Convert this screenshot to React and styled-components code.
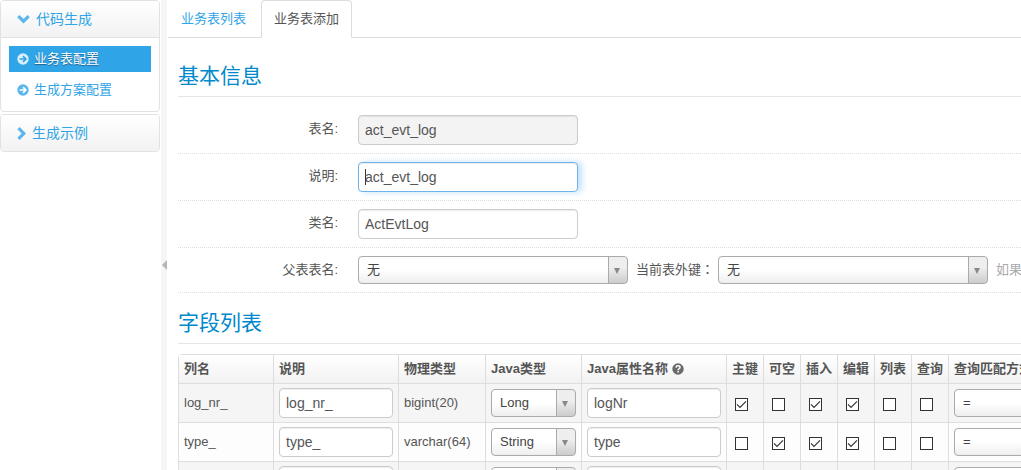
import React, { useState } from 'react';
import styled, { createGlobalStyle } from 'styled-components';

const GlobalStyle = createGlobalStyle`
  * {
    box-sizing: border-box;
  }

  body {
    margin: 0;
    background: #fff;
    color: #555;
    font-family: "Liberation Sans", "Noto Sans CJK SC", sans-serif;
    font-size: 13px;
    line-height: 20px;
  }
`;

const menuItems = [
  { name: '业务表配置', active: true },
  { name: '生成方案配置', active: false },
];

// Checkbox columns of the field table
const flags = ['主键', '可空', '插入', '编辑', '列表', '查询'];

const columns = [
  { column: 'log_nr_', comment: 'log_nr_', jdbcType: 'bigint(20)', javaType: 'Long', javaField: 'logNr', checked: ['主键', '插入', '编辑'] },
  { column: 'type_', comment: 'type_', jdbcType: 'varchar(64)', javaType: 'String', javaField: 'type', checked: ['可空', '插入', '编辑'] },
  { column: '', comment: '', jdbcType: '', javaType: 'String', javaField: '', checked: [] },
];

const Page = styled.div`
  display: flex;
  height: 100vh;
  overflow: hidden;
`;

const Sidebar = styled.aside`
  flex: 0 0 160px;
  display: flex;
  flex-direction: column;
  gap: 2px;
`;

const MenuGroup = styled.section`
  border: 1px solid #e2e2e2;
  border-radius: 4px;
  overflow: hidden;
`;

const MenuHeading = styled.button`
  display: flex;
  align-items: center;
  gap: 6px;
  width: 100%;
  height: 36px;
  padding: 0 16px;
  border: 0;
  background: linear-gradient(#fff, #f2f2f2);
  color: #2fa4e7;
  font: inherit;
  font-size: 14px;
  cursor: pointer;

  svg {
    fill: #5ab6ec;
  }
`;

const MenuList = styled.nav`
  display: flex;
  flex-direction: column;
  gap: 5px;
  padding: 8px;
  border-top: 1px solid #e2e2e2;
`;

const MenuLink = styled.a`
  display: flex;
  align-items: center;
  gap: 5px;
  height: 26px;
  padding: 0 8px;
  background: ${(props) => (props.$active ? '#2fa4e7' : 'transparent')};
  color: ${(props) => (props.$active ? '#fff' : '#2fa4e7')};
  text-shadow: ${(props) => (props.$active ? '0 1px 1px rgba(0, 0, 0, 0.4)' : 'none')};
  text-decoration: none;
`;

const Splitter = styled.button`
  flex: 0 0 6px;
  display: flex;
  align-items: flex-start;
  justify-content: flex-end;
  margin: 0 1px;
  padding: 260px 0 0;
  border: 0;
  background: #f5f5f5;
  cursor: pointer;
`;

const Content = styled.main`
  flex: 1;
  min-width: 0;
  overflow: hidden;
`;

const Tabs = styled.nav`
  display: flex;
  gap: 2px;
  height: 38px;
  border-bottom: 1px solid #ddd;
`;

const Tab = styled.a`
  height: 38px;
  padding: 8px 12px;
  border: 1px solid transparent;
  text-decoration: none;
  color: #2fa4e7;

  ${(props) =>
    props.$active &&
    `
    border-color: #ddd #ddd #fff;
    border-radius: 4px 4px 0 0;
    background: #fff;
    color: #555;
  `}
`;

const Form = styled.form`
  padding: 8px 0 0 10px;
`;

const Legend = styled.h2`
  margin: 10px 0;
  border-bottom: 1px solid #e5e5e5;
  color: #0088cc;
  font-size: 21px;
  font-weight: 400;
  line-height: 40px;
`;

const ControlGroup = styled.div`
  display: flex;
  gap: 20px;
  padding: 8px 0;
  border-bottom: 1px dotted #ddd;
`;

const ControlLabel = styled.label`
  flex: 0 0 160px;
  padding-top: 4px;
  text-align: right;
`;

const Controls = styled.div`
  display: flex;
  align-items: flex-start;
  gap: 4px;
  white-space: nowrap;
`;

// The TC face centres the full-width colon in its box
const InlineLabel = styled.label`
  padding: 3px 0 0 4px;

  span {
    font-family: "Noto Sans CJK TC", sans-serif;
  }
`;

const Hint = styled.span`
  padding: 4px 0 0 4px;
  color: #aaa;
`;

const TextInput = styled.input`
  display: block;
  width: ${(props) => props.$width || '100%'};
  height: 30px;
  padding: 4px 6px;
  border: 1px solid #ccc;
  border-radius: 4px;
  outline: 0;
  background: #fff;
  box-shadow: inset 0 1px 1px rgba(0, 0, 0, 0.075);
  color: #555;
  font: inherit;
  font-size: 14px;

  &:read-only {
    background: #f3f3f3;
  }

  &:focus {
    border-color: #6db4ec;
    background: linear-gradient(#333, #333) 6px center / 1px 16px no-repeat #fff;
    box-shadow: inset 0 1px 1px rgba(0, 0, 0, 0.075), 4px 0 6px rgba(82, 168, 236, 0.35);
    caret-color: #333;
  }
`;

const SelectBox = styled.span`
  position: relative;
  display: block;
  width: ${(props) => props.$width || '100%'};

  svg {
    position: absolute;
    top: 12px;
    right: 8px;
    fill: #888;
    pointer-events: none;
  }
`;

const Select = styled.select`
  display: block;
  width: 100%;
  height: 28px;
  padding: 0 28px 0 8px;
  border: 1px solid #aaa;
  border-radius: 4px;
  appearance: none;
  background:
    linear-gradient(#aaa, #aaa) right 18px top / 1px 100% no-repeat,
    linear-gradient(#eee 40%, #ccc) right top / 18px 100% no-repeat,
    linear-gradient(#fff 50%, #eee);
  color: #444;
  font: inherit;
`;

const FieldTable = styled.table`
  width: 100%;
  min-width: 900px;
  table-layout: fixed;
  border: 1px solid #ddd;
  border-radius: 4px;
  border-collapse: separate;
  border-spacing: 0;

  th,
  td {
    padding: 4px 5px;
    border-left: 1px solid #ddd;
    text-align: left;
    vertical-align: middle;
    white-space: nowrap;
  }

  th {
    background: linear-gradient(#fff, #f2f2f2);
    font-weight: 700;
  }

  td {
    border-top: 1px solid #ddd;
  }

  th:first-child,
  td:first-child {
    border-left: 0;
  }

  tbody tr:nth-child(odd) td {
    background: #f5f5f5;
  }

  tbody tr:nth-child(even) td {
    background: #fdfdfd;
  }
`;

const Col = styled.col`
  width: ${(props) => props.$width};
`;

const HelpIcon = styled.svg`
  vertical-align: -2px;
`;

const Checkbox = styled.input`
  display: block;
  width: 13px;
  height: 13px;
  margin: 3px 3px 0;
  border: 1px solid #333;
  appearance: none;
  background: #fff;

  &:checked {
    background: #fff
      url("data:image/svg+xml,%3Csvg xmlns='http://www.w3.org/2000/svg' viewBox='0 0 11 11'%3E%3Cpath d='M1 5.3 4 8.3 10 2.3' fill='none' stroke='%23333' stroke-width='1.2'/%3E%3C/svg%3E")
      center / 11px 11px no-repeat;
  }
`;

function ChevronDown() {
  return (
    <svg width="13" height="10" viewBox="0 0 13 10" aria-hidden="true">
      <path d="M2.4 1 6.5 5.1 10.6 1 12.8 3.2 6.5 9.5.2 3.2z" />
    </svg>
  );
}

function ChevronRight() {
  return (
    <svg width="9" height="13" viewBox="0 0 9 13" aria-hidden="true">
      <path d="M2.6 0 9 6.500 2.6 13 .400 10.800 4.600 6.500.400 2.200z" />
    </svg>
  );
}

function CircleArrow({ active }) {
  return (
    <svg width="12" height="12" viewBox="0 0 12 12" aria-hidden="true">
      <circle cx="6" cy="6" r="5.7" fill={active ? '#d9eefb' : '#5ab6ec'} />
      <path
        d="M2.6 6h6M6 3.1 8.9 6 6 8.9"
        fill="none"
        stroke={active ? '#2fa4e7' : '#fff'}
        strokeWidth="1.6"
      />
    </svg>
  );
}

function DropDown({ width, id, label, value }) {
  return (
    <SelectBox $width={width}>
      <Select id={id} aria-label={label} defaultValue={value}>
        <option value={value}>{value}</option>
      </Select>
      <svg width="6" height="6" viewBox="0 0 6 6" aria-hidden="true">
        <path d="M0 0h6L3 6z" />
      </svg>
    </SelectBox>
  );
}

function App() {
  const [comments, setComments] = useState('act_evt_log');
  const [className, setClassName] = useState('ActEvtLog');

  return (
    <>
      <GlobalStyle />
      <Page>
        <Sidebar>
          <MenuGroup>
            <MenuHeading type="button">
              <ChevronDown />
              代码生成
            </MenuHeading>
            <MenuList>
              {menuItems.map((item) => (
                <MenuLink key={item.name} href="#" $active={item.active}>
                  <CircleArrow active={item.active} />
                  {item.name}
                </MenuLink>
              ))}
            </MenuList>
          </MenuGroup>
          <MenuGroup>
            <MenuHeading type="button">
              <ChevronRight />
              生成示例
            </MenuHeading>
          </MenuGroup>
        </Sidebar>

        <Splitter type="button" aria-label="收起">
          <svg width="5" height="10" viewBox="0 0 5 10" aria-hidden="true">
            <path d="M5 0v10L0 5z" fill="#b5b5b5" />
          </svg>
        </Splitter>

        <Content>
          <Tabs>
            <Tab href="#">业务表列表</Tab>
            <Tab href="#" $active>业务表添加</Tab>
          </Tabs>

          <Form>
            <Legend>基本信息</Legend>
            <ControlGroup>
              <ControlLabel htmlFor="name">表名:</ControlLabel>
              <TextInput id="name" $width="220px" value="act_evt_log" readOnly />
            </ControlGroup>
            <ControlGroup>
              <ControlLabel htmlFor="comments">说明:</ControlLabel>
              <TextInput
                id="comments"
                $width="220px"
                value={comments}
                onChange={(e) => setComments(e.target.value)}
                autoFocus
              />
            </ControlGroup>
            <ControlGroup>
              <ControlLabel htmlFor="className">类名:</ControlLabel>
              <TextInput
                id="className"
                $width="220px"
                value={className}
                onChange={(e) => setClassName(e.target.value)}
              />
            </ControlGroup>
            <ControlGroup>
              <ControlLabel htmlFor="parentTable">父表表名:</ControlLabel>
              <Controls>
                <DropDown id="parentTable" width="270px" value="无" />
                <InlineLabel htmlFor="parentTableFk">
                  当前表外键<span>：</span>
                </InlineLabel>
                <DropDown id="parentTableFk" width="270px" value="无" />
                <Hint>如果</Hint>
              </Controls>
            </ControlGroup>

            <Legend>字段列表</Legend>
            <FieldTable>
              <colgroup>
                <Col $width="94px" />
                <Col $width="125px" />
                <Col $width="87px" />
                <Col $width="96px" />
                <Col $width="145px" />
                {flags.map((flag) => (
                  <Col key={flag} $width="37px" />
                ))}
                <Col />
              </colgroup>
              <thead>
                <tr>
                  <th>列名</th>
                  <th>说明</th>
                  <th>物理类型</th>
                  <th>Java类型</th>
                  <th>
                    Java属性名称{' '}
                    <HelpIcon width="12" height="12" viewBox="0 0 12 12" aria-hidden="true">
                      <circle cx="6" cy="6" r="5.7" fill="#6a6a6a" />
                      <path
                        d="M4 4.6C4.1 3.2 5 2.8 6 2.8c1.2 0 2 .7 2 1.6C8 5.8 6.1 5.7 6.1 7.3M6.1 8.1v1.5"
                        fill="none"
                        stroke="#fff"
                        strokeWidth="1.5"
                      />
                    </HelpIcon>
                  </th>
                  {flags.map((flag) => (
                    <th key={flag}>{flag}</th>
                  ))}
                  <th>查询匹配方式</th>
                </tr>
              </thead>
              <tbody>
                {columns.map((row, index) => (
                  <tr key={index}>
                    <td>{row.column}</td>
                    <td>
                      <TextInput aria-label="说明" defaultValue={row.comment} />
                    </td>
                    <td>{row.jdbcType}</td>
                    <td>
                      <DropDown label="Java类型" value={row.javaType} />
                    </td>
                    <td>
                      <TextInput aria-label="Java属性名称" defaultValue={row.javaField} />
                    </td>
                    {flags.map((flag) => (
                      <td key={flag}>
                        <Checkbox
                          type="checkbox"
                          aria-label={flag}
                          defaultChecked={row.checked.includes(flag)}
                        />
                      </td>
                    ))}
                    <td>
                      <DropDown label="查询匹配方式" value="=" />
                    </td>
                  </tr>
                ))}
              </tbody>
            </FieldTable>
          </Form>
        </Content>
      </Page>
    </>
  );
}

export default App;
